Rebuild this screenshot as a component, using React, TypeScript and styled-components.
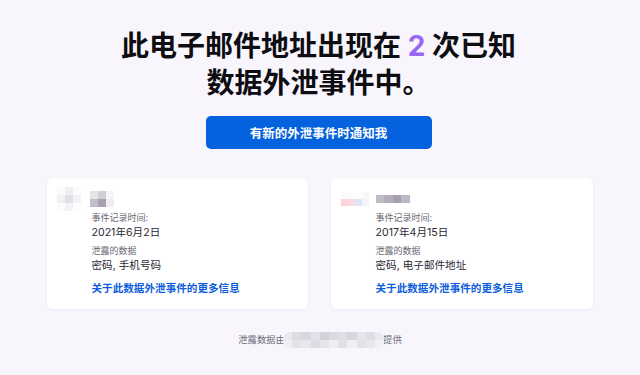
import React from "react";
import styled, { createGlobalStyle } from "styled-components";

const GlobalStyle = createGlobalStyle`
  html, body {
    margin: 0;
    padding: 0;
    background: #f8f6fc;
  }
  body {
    font-family: Inter, "Noto Sans CJK SC", "Noto Sans", sans-serif;
    -webkit-font-smoothing: antialiased;
  }
`;

const Page = styled.main`
  display: flex;
  flex-direction: column;
  align-items: center;
  height: 375px;
  padding-top: 28px;
  box-sizing: border-box;
  background: #f8f6fc;
`;

const Title = styled.h1`
  margin: 0 0 0 -3px;
  font-size: 28px;
  line-height: 37px;
  font-weight: 700;
  color: #0d0d12;
  text-align: center;
`;

const Count = styled.span`
  color: #9866f2;
`;

const NotifyButton = styled.button`
  margin: 14px 3px 0 0;
  width: 226px;
  height: 33px;
  border: none;
  border-radius: 5px;
  background: #0462de;
  color: #fff;
  font-family: inherit;
  font-size: 12.5px;
  font-weight: 700;
  cursor: pointer;
`;

const CardRow = styled.section`
  display: grid;
  grid-template-columns: 261px 262px;
  gap: 23px;
  margin: 29px 1px 0 0;
`;

const Card = styled.article`
  display: grid;
  grid-template-columns: 35px 1fr;
  grid-template-rows: 23px auto;
  align-content: start;
  height: 131px;
  box-sizing: border-box;
  padding: 9px 12px 0 10px;
  background: #fff;
  border-radius: 6px;
  box-shadow: 0 1px 3px rgba(40, 30, 80, 0.06);
`;

const Header = styled.div<{ $nameOffset: number }>`
  grid-column: 1 / 3;
  display: flex;
  align-items: center;
  gap: ${(p) => p.$nameOffset}px;
`;

const Mosaic = styled.div<{ $w: number; $h: number; $cols: number; $radius?: number }>`
  display: grid;
  grid-template-columns: repeat(${(p) => p.$cols}, ${(p) => p.$w}px);
  grid-auto-rows: ${(p) => p.$h}px;
  border-radius: ${(p) => p.$radius ?? 0}px;
  overflow: hidden;
  filter: blur(0.6px);
`;

const Cell = styled.span<{ $c: string }>`
  background: ${(p) => p.$c};
`;

const Details = styled.div`
  grid-column: 2;
  display: flex;
  flex-direction: column;
  padding-top: 1px;
`;

const Label = styled.div<{ $gap?: number }>`
  margin-top: ${(p) => p.$gap ?? 0}px;
  font-size: 9px;
  line-height: 14px;
  color: #6a6873;
`;

const Value = styled.div`
  font-size: 10.6px;
  line-height: 15px;
  color: #2a2833;
`;

const MoreLink = styled.a`
  margin-top: 8px;
  font-size: 10.6px;
  line-height: 15px;
  font-weight: 700;
  color: #0b5ddc;
  text-decoration: none;
`;

const Footer = styled.footer`
  display: flex;
  align-items: center;
  margin-top: 23px;
  font-size: 9.4px;
  line-height: 16px;
  color: #6f6c78;
`;

const FooterMask = styled.div`
  margin: 0 -1px 0 -2px;
`;

type MosaicProps = { cells: string[]; cols: number; w: number; h: number; radius?: number };

const Pixelated: React.FC<MosaicProps> = ({ cells, cols, w, h, radius }) => (
  <Mosaic $cols={cols} $w={w} $h={h} $radius={radius}>
    {cells.map((c, i) => (
      <Cell key={i} $c={c} />
    ))}
  </Mosaic>
);

interface IBreach {
  logo: MosaicProps;
  name: MosaicProps;
  nameOffset: number;
  date: string;
  data: string;
}

const breaches: IBreach[] = [
  {
    logo: {
      cols: 3,
      w: 8,
      h: 8,
      cells: ["#fbfafc", "#f1eff3", "#fbfafc", "#f2f0f4", "#e2dfe5", "#f3f1f5", "#fcfbfd", "#f4f2f6", "#fdfdfe"],
    },
    name: {
      cols: 3,
      w: 8,
      h: 8,
      cells: ["#e7e4ea", "#d3cfd9", "#f6f5f8", "#c3bdca", "#a8a1b1", "#eeecf1"],
    },
    nameOffset: 9,
    date: "2021年6月2日",
    data: "密码, 手机号码",
  },
  {
    logo: {
      cols: 4,
      w: 7,
      h: 7,
      cells: ["#fdfcfd", "#fdfcfd", "#fdfcfd", "#f7f6f9", "#fcd3d8", "#fbd9de", "#dbe7f6", "#f4f3f6"],
    },
    name: {
      cols: 4,
      w: 8.5,
      h: 8,
      cells: ["#c1bbc8", "#b4adbb", "#a79faf", "#bfb8c6"],
    },
    nameOffset: 7,
    date: "2017年4月15日",
    data: "密码, 电子邮件地址",
  },
];

const footerCells = [
  "#eceaf0", "#dedbe3", "#d9d6df", "#e3e0e8", "#d5d1da", "#dcd9e1", "#e1dee6", "#d8d5de", "#e6e3eb", "#dfdce5", "#ebe9ef",
  "#f0eef3", "#e5e2ea", "#e9e6ed", "#dedbe3", "#e7e4ec", "#efedf2", "#e2dfe7", "#f1eff4", "#e4e1e9", "#e9e7ee", "#f2f0f5",
];

const BreachCard: React.FC<IBreach> = ({ logo, name, nameOffset, date, data }) => (
  <Card>
    <Header $nameOffset={nameOffset}>
      <Pixelated {...logo} />
      <Pixelated {...name} />
    </Header>
    <Details>
      <Label>事件记录时间:</Label>
      <Value>{date}</Value>
      <Label $gap={4}>泄露的数据</Label>
      <Value>{data}</Value>
      <MoreLink href="#">关于此数据外泄事件的更多信息</MoreLink>
    </Details>
  </Card>
);

const App: React.FC = () => (
  <>
    <GlobalStyle />
    <Page>
      <Title>
        此电子邮件地址出现在 <Count>2</Count> 次已知
        <br />
        数据外泄事件中。
      </Title>
      <NotifyButton>有新的外泄事件时通知我</NotifyButton>
      <CardRow>
        {breaches.map((b, i) => (
          <BreachCard key={i} {...b} />
        ))}
      </CardRow>
      <Footer>
        泄露数据由
        <FooterMask>
          <Pixelated cols={11} w={9.2} h={8} cells={footerCells} radius={6} />
        </FooterMask>
        提供
      </Footer>
    </Page>
  </>
);

export default App;
